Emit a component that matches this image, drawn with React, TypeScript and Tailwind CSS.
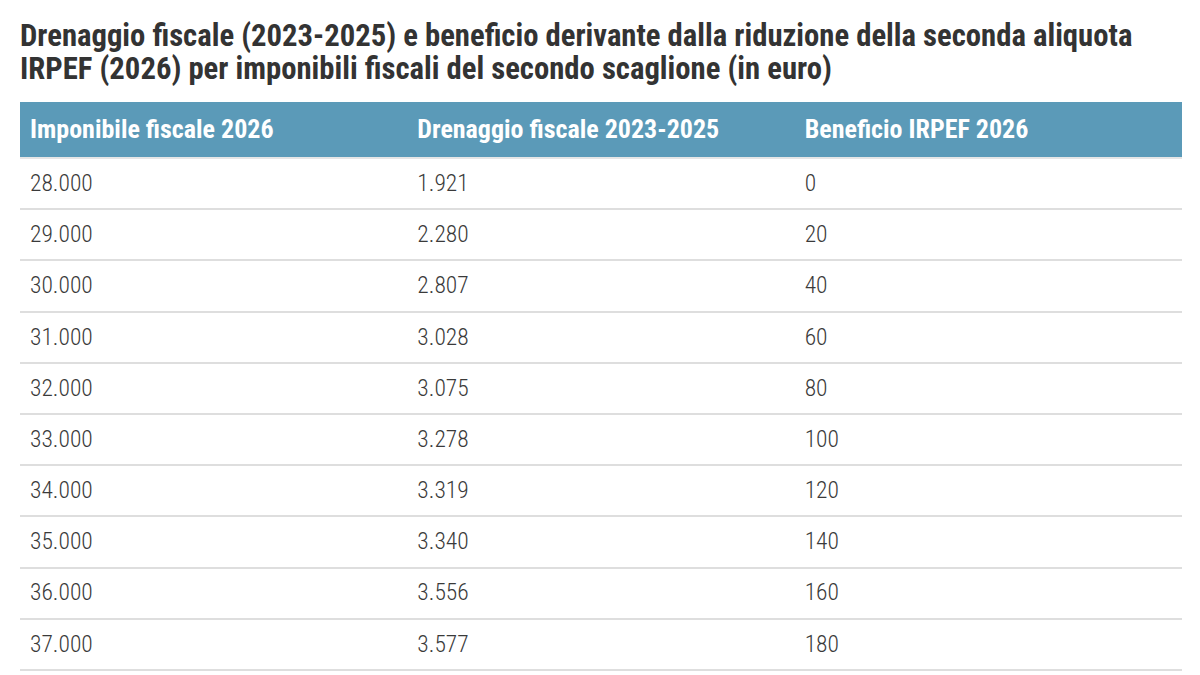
import React from "react";

const rows: [string, string, string][] = [
  ["28.000", "1.921", "0"],
  ["29.000", "2.280", "20"],
  ["30.000", "2.807", "40"],
  ["31.000", "3.028", "60"],
  ["32.000", "3.075", "80"],
  ["33.000", "3.278", "100"],
  ["34.000", "3.319", "120"],
  ["35.000", "3.340", "140"],
  ["36.000", "3.556", "160"],
  ["37.000", "3.577", "180"],
];

export default function App() {
  return (
    <div className="w-[1200px] h-[675px] bg-white overflow-hidden pl-[20px] pr-[18px] pt-[20px] font-['Roboto_Condensed','Roboto',sans-serif]">
      <h1 className="text-[30.7px] leading-[32.5px] font-bold text-[#333333] mb-[17px] pr-[20px]">
        Drenaggio fiscale (2023-2025) e beneficio derivante dalla riduzione della seconda aliquota IRPEF (2026) per
        imponibili fiscali del secondo scaglione (in euro)
      </h1>
      <div className="w-full">
        <div className="grid grid-cols-3 bg-[#5b9ab8] h-[55px] items-center pb-[1px]">
          <div className="pl-[10px] text-white font-bold text-[26px]">Imponibile fiscale 2026</div>
          <div className="pl-[10px] text-white font-bold text-[26px]">Drenaggio fiscale 2023-2025</div>
          <div className="pl-[10px] text-white font-bold text-[26px]">Beneficio IRPEF 2026</div>
        </div>
        <div className="h-[2px] bg-[#e6e6e6]" />
        {rows.map((r) => (
          <div key={r[0]} className="grid grid-cols-3 h-[51.2px] items-center border-b-2 border-[#dedede] text-[#3a3a3a] font-light text-[23.5px]">
            <div className="pl-[10px]">{r[0]}</div>
            <div className="pl-[10px]">{r[1]}</div>
            <div className="pl-[10px]">{r[2]}</div>
          </div>
        ))}
      </div>
    </div>
  );
}
